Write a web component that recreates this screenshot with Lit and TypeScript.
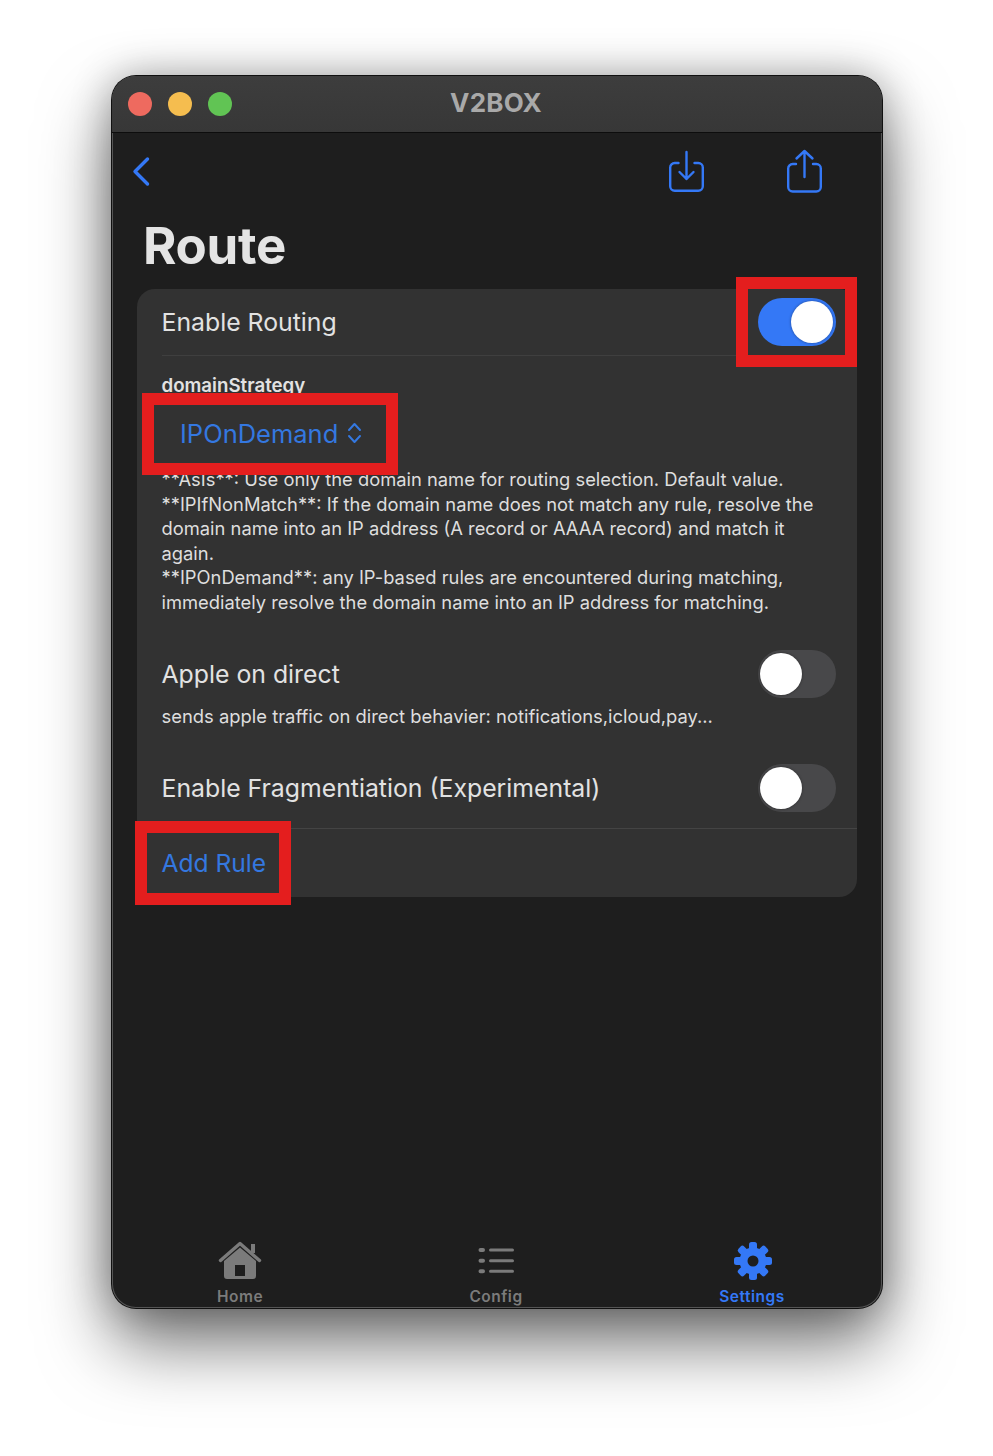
import { LitElement, html, css, svg } from "lit";
import { customElement } from "lit/decorators.js";

// eight gear teeth round the hub
const gearTeeth = [0, 45, 90, 135, 180, 225, 270, 315].map(
  (a) => svg`<rect x="16" y="1" width="8" height="9" rx="2.5" transform="rotate(${a} 20 20)"></rect>`,
);

@customElement("app-root")
export class AppRoot extends LitElement {
  static styles = css`
    :host {
      --blue: #3478f6;
      --link: #3478e0;
      display: block;
      height: 1456px;
      background: #fff;
      overflow: hidden;
      font-family: Inter, "Liberation Sans", sans-serif;
      padding: 76px 0 0 112px;
      box-sizing: border-box;
    }
    .window {
      width: 770px;
      height: 1232px;
      box-sizing: border-box;
      display: flex;
      flex-direction: column;
      border-radius: 24px;
      background: #1e1e1e;
      overflow: hidden;
      box-shadow: 0 0 0 1px #111, inset 0 0 0 1px #555, 0 36px 70px rgba(0, 0, 0, 0.55), 0 0 40px rgba(0, 0, 0, 0.3);
    }
    .titlebar {
      height: 57px;
      flex: none;
      box-sizing: border-box;
      position: relative;
      display: flex;
      align-items: center;
      justify-content: center;
      padding: 0 2px 3px 0;
      background: linear-gradient(#3d3d3d, #373737);
      border-bottom: 1px solid #0d0d0d;
    }
    .lights {
      position: absolute;
      left: 16px;
      top: 16px;
      display: flex;
      gap: 16px;
    }
    .lights span {
      width: 24px;
      height: 24px;
      border-radius: 50%;
    }
    .red { background: #ee6a5f; }
    .yellow { background: #f5bd4f; }
    .green { background: #61c454; }
    .app-name {
      font-size: 26px;
      font-weight: 700;
      color: #a9a9a9;
      letter-spacing: 0.2px;
    }
    .nav {
      height: 77px;
      flex: none;
      display: flex;
      align-items: flex-start;
    }
    .nav svg {
      fill: none;
      stroke: var(--blue);
      stroke-linecap: round;
      stroke-linejoin: round;
    }
    .back { margin: 23px 0 0 20px; }
    .import { margin: 17px 0 0 516px; }
    .share { margin: 16px 0 0 81px; }
    h1 {
      margin: 0 0 0 31px;
      height: 79px;
      font-size: 51px;
      line-height: 72px;
      font-weight: 700;
      color: #e4e4e4;
      letter-spacing: -0.3px;
    }
    .card {
      margin-left: 25px;
      width: 720px;
      height: 608px;
      border-radius: 18px;
      background: #323232;
      display: flex;
      flex-direction: column;
      color: #e2e2e2;
    }
    .row {
      position: relative;
      display: flex;
      align-items: center;
      justify-content: space-between;
      padding: 0 21px 0 24.5px;
      font-size: 24.8px;
    }
    .routing { height: 66px; }
    .rule {
      height: 1px;
      margin-left: 25px;
      background: #3f3f3f;
    }
    .strategy {
      margin: 18px 0 0 24.5px;
      font-size: 18.7px;
      line-height: 24px;
      font-weight: 600;
    }
    .picker {
      position: relative;
      box-sizing: border-box;
      height: 69px;
      padding-top: 1px;
      margin-left: 43px;
      display: flex;
      align-items: center;
      gap: 9px;
      font-size: 25.5px;
      color: var(--link);
    }
    .desc {
      margin: 0 24.5px;
      font-size: 18.35px;
      line-height: 24.6px;
      color: #dedede;
    }
    .apple { height: 48px; margin-top: 35px; }
    .note {
      margin: 6px 24.5px 0;
      font-size: 18.4px;
      line-height: 24px;
      color: #dedede;
    }
    .frag { height: 48px; margin-top: 36px; }
    .full-rule {
      height: 1px;
      margin-top: 16px;
      background: #444;
    }
    .add {
      height: 68px;
      font-size: 24.6px;
      color: var(--link);
    }
    .toggle {
      position: relative;
      width: 78px;
      height: 48px;
      flex: none;
      border-radius: 24px;
      background: #48484a;
    }
    .toggle.on { background: var(--blue); }
    .knob {
      position: absolute;
      top: 3px;
      left: 2px;
      width: 42px;
      height: 42px;
      border-radius: 50%;
      background: #fff;
      box-shadow: 0 0 3px rgba(0, 0, 0, 0.4);
    }
    .toggle.on .knob { left: 33px; }
    /* red annotation frames drawn over the screenshot */
    .mark {
      position: absolute;
      box-sizing: border-box;
      border: 12px solid #e41e1e;
      background: #323232;
    }
    .mark.clear { background: none; }
    .mark-toggle { left: 599px; top: -12px; width: 121px; height: 90px; }
    .mark-picker { left: -38px; top: -5px; width: 256px; height: 82px; z-index: 1; }
    .mark-add { left: -2px; top: -8px; width: 156px; height: 84px; }
    .picker > .text,
    .picker > svg { position: relative; z-index: 2; }
    .add .text,
    .routing .toggle { position: relative; z-index: 2; }
    .tabs {
      margin-top: auto;
      height: 70px;
      box-sizing: border-box;
      padding-top: 3px;
      flex: none;
      display: flex;
      color: #7b7b7b;
    }
    .tab {
      width: 256px;
      display: flex;
      flex-direction: column;
      align-items: center;
      font-size: 15.5px;
      font-weight: 600;
      letter-spacing: 0.5px;
    }
    .tab svg { display: block; height: 40px; }
    .tab span { line-height: 22px; margin-top: 5px; }
    .tab.active { color: var(--blue); }
    .tab.active svg { margin-left: 2px; }
  `;

  private toggle(on: boolean) {
    return html`<div class="toggle ${on ? "on" : ""}"><div class="knob"></div></div>`;
  }

  render() {
    return html`
      <div class="window">
        <div class="titlebar">
          <div class="lights">
            <span class="red"></span><span class="yellow"></span><span class="green"></span>
          </div>
          <div class="app-name">V2BOX</div>
        </div>
        <div class="nav">
          <svg class="back" width="20" height="32" viewBox="0 0 20 32" stroke-width="3.4">
            <path d="M15.500 3 3 15.500 15.500 28"></path>
          </svg>
          <svg class="import" width="37" height="44" viewBox="0 0 37 44" stroke-width="2.4">
            <path d="M10.500 13H6.700a4.500 4.500 0 0 0-4.500 4.500v18.800a4.500 4.500 0 0 0 4.500 4.500h23.600a4.500 4.500 0 0 0 4.500-4.500V17.500a4.500 4.500 0 0 0-4.500-4.500h-3.800"></path>
            <path d="M18.500 2v27M11.500 22l7 7 7-7"></path>
          </svg>
          <svg class="share" width="37" height="45" viewBox="0 0 37 45" stroke-width="2.4">
            <path d="M10 15H6.700a4.500 4.500 0 0 0-4.500 4.500v18.500a4.500 4.500 0 0 0 4.500 4.500h23.600a4.500 4.500 0 0 0 4.500-4.500V19.500a4.500 4.500 0 0 0-4.500-4.500H27"></path>
            <path d="M18.500 28V2M10.500 9.500l8-7.500 8 7.500"></path>
          </svg>
        </div>
        <h1>Route</h1>
        <div class="card">
          <div class="row routing">
            <span>Enable Routing</span>
            ${this.toggle(true)}
            <div class="mark clear mark-toggle"></div>
          </div>
          <div class="rule"></div>
          <div class="strategy">domainStrategy</div>
          <div class="picker">
            <div class="mark mark-picker"></div>
            <span class="text">IPOnDemand</span>
            <svg width="15" height="24" viewBox="0 0 15 24" fill="none" stroke="#3478e0" stroke-width="2" stroke-linecap="round" stroke-linejoin="round">
              <path d="M2 9l5.500-6 5.500 6M2 15l5.500 6 5.500-6"></path>
            </svg>
          </div>
          <div class="desc">
            **AsIs**: Use only the domain name for routing selection. Default value.<br />
            **IPIfNonMatch**: If the domain name does not match any rule, resolve the<br />
            domain name into an IP address (A record or AAAA record) and match it<br />
            again.<br />
            **IPOnDemand**: any IP-based rules are encountered during matching,<br />
            immediately resolve the domain name into an IP address for matching.
          </div>
          <div class="row apple">
            <span>Apple on direct</span>
            ${this.toggle(false)}
          </div>
          <div class="note">sends apple traffic on direct behavier: notifications,icloud,pay...</div>
          <div class="row frag">
            <span>Enable Fragmentiation (Experimental)</span>
            ${this.toggle(false)}
          </div>
          <div class="full-rule"></div>
          <div class="row add">
            <div class="mark clear mark-add"></div>
            <span class="text">Add Rule</span>
          </div>
        </div>
        <div class="tabs">
          <div class="tab">
            <svg width="44" height="40" viewBox="0 0 44 40">
              <path fill="currentColor" fill-rule="evenodd" d="M22 6.500 6 20v15a3 3 0 0 0 3 3h26a3 3 0 0 0 3-3V20zM17 24h10v11H17z"></path>
              <path fill="currentColor" d="M33 3h4v9h-4z"></path>
              <path fill="none" stroke="currentColor" stroke-width="3.4" stroke-linecap="round" stroke-linejoin="round" d="M2.500 19.500 22 2.500l19.500 17"></path>
            </svg>
            <span>Home</span>
          </div>
          <div class="tab">
            <svg width="38" height="40" viewBox="0 0 38 40" fill="none" stroke="currentColor" stroke-width="3" stroke-linecap="round">
              <path d="M3.500 9H6M3.500 19.700H6M3.500 30.300H6" stroke-width="4"></path>
              <path d="M13.500 9h22M13.500 19.700h22M13.500 30.300h22"></path>
            </svg>
            <span>Config</span>
          </div>
          <div class="tab active">
            <svg width="40" height="40" viewBox="0 0 40 40" fill="currentColor">
              ${gearTeeth}
              <circle cx="20" cy="20" r="13.5"></circle>
              <circle cx="20" cy="20" r="5.5" fill="#1e1e1e"></circle>
            </svg>
            <span>Settings</span>
          </div>
        </div>
      </div>
    `;
  }
}
